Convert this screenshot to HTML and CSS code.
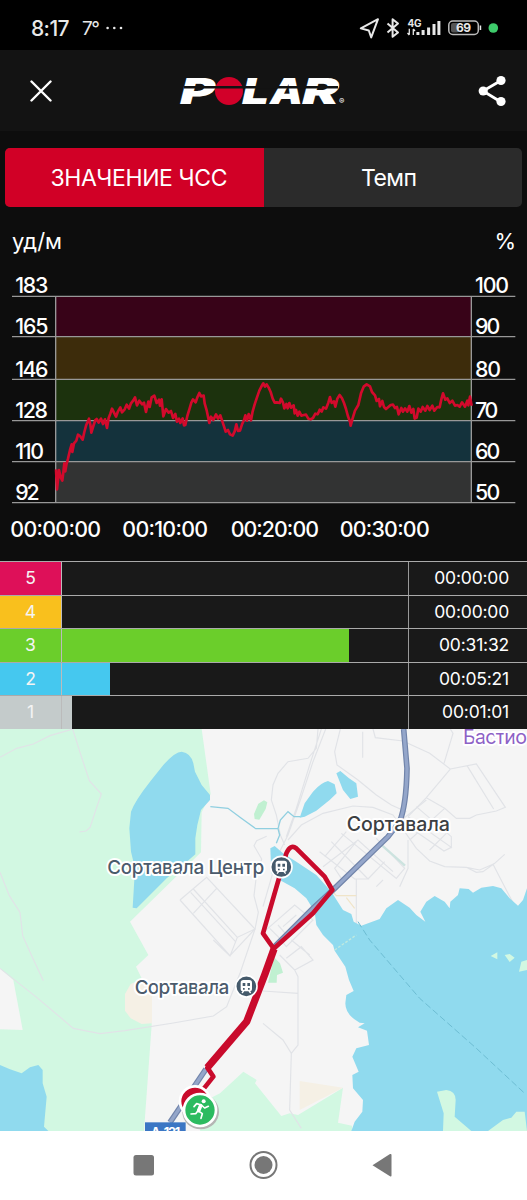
FILE: index.html
```html
<!DOCTYPE html>
<html lang="ru">
<head>
    <meta charset="UTF-8">
    <meta name="viewport" content="width=device-width, initial-scale=1.0">
    <title>Polar</title>
    <link rel="stylesheet" href="styles.css">
</head>
<body>
    <div class="status-bar">
        <div class="status-left">
            <span class="clock">8:17</span>
            <span class="weather">7°</span>
            <svg width="17" height="4" viewBox="0 0 17 4"><circle cx="1.6" cy="2" r="1.3"/><circle cx="8.3" cy="2" r="1.3"/><circle cx="15" cy="2" r="1.3"/></svg>
        </div>
        <svg class="status-icons" width="140" height="24" viewBox="0 0 140 24">
            <path class="line" d="M1.8 12.4 19 3.2 12.2 21.4 9.8 14.5Z"/>
            <path class="line" d="M28.5 7.5 39 16.5 33.6 20.8V3.2L39 7.5 28.5 16.500"/>
            <text x="48.500" y="10.500" textLength="14" class="net">4G</text>
            <path class="line thin" d="M50.300 12.800v6M48.500 17l1.800 2M54.300 19v-6M56 15l-1.700-2"/>
            <path class="signal" d="M58.900 19v-3M64.100 19v-5M69.600 19V11.500M75 19V8M79.900 19V5"/>
            <rect class="frame" x="89.800" y="5" width="29.500" height="13.500" rx="4"/>
            <rect class="charge" x="92" y="7" width="8" height="9.500" rx="2"/>
            <text x="97" y="16.200" textLength="15" class="percent">69</text>
            <rect x="120.700" y="9.500" width="1.500" height="4.500"/>
            <circle class="active-dot" cx="134.300" cy="12" r="4.800"/>
        </svg>
    </div>

    <header class="header">
        <svg class="icon-close" width="22" height="22" viewBox="0 0 22 22"><path d="M1.500 1.500 20.500 20.500M20.500 1.500 1.500 20.500"/></svg>
        <svg class="logo" width="176" height="50" viewBox="-4 -11 176 50">
            <circle cx="49" cy="14" r="14"/>
            <text x="0" y="27" textLength="35" lengthAdjust="spacingAndGlyphs">P</text>
            <text x="62" y="27" textLength="27" lengthAdjust="spacingAndGlyphs">L</text>
            <text x="90" y="27" textLength="33" lengthAdjust="spacingAndGlyphs">A</text>
            <text x="122" y="27" textLength="37" lengthAdjust="spacingAndGlyphs">R</text>
            <path d="M4 10.300H158"/>
            <text x="159" y="26.500" class="reg">®</text>
        </svg>
        <svg class="icon-share" width="28" height="32" viewBox="0 0 28 32">
            <path d="M23 5.500 5 16 23 27"/>
            <circle cx="23" cy="5.500" r="4.600"/><circle cx="5.200" cy="16" r="4.600"/><circle cx="23" cy="26.500" r="4.600"/>
        </svg>
    </header>

    <main class="training">
        <div class="tabs">
            <div class="tab active">ЗНАЧЕНИЕ ЧСС</div>
            <div class="tab">Темп</div>
        </div>
        <div class="units">
            <span>уд/м</span>
            <span>%</span>
        </div>

        <!-- heart rate chart -->
        <svg class="chart" width="527" height="280" viewBox="0 0 1581 840">
            <rect class="z5" x="167" y="78" width="1247" height="121"/>
            <rect class="z4" x="167" y="199" width="1247" height="129"/>
            <rect class="z3" x="167" y="328" width="1247" height="124"/>
            <rect class="z2" x="167" y="452" width="1247" height="123"/>
            <rect class="z1" x="167" y="575" width="1247" height="122"/>
            <path class="grid" d="M36 79H1546M36 200H1546M36 328H1546M36 452H1546M36 575H1546M36 698H1546M167 79V698M1414 79V698"/>
            <path class="pulse" d="M168 598 171 658 177 600 182 622 187 632 191 598 193 580 196 604 199 585 204 566 210 540 215 523 217 546 222 520 229 512 234 494 240 498 248 509 253 486 259 464 267 446 271 464 274 488 280 468 286 450 290 447 296 458 303 446 309 462 315 448 321 474 326 444 331 431 336 416 342 428 348 440 354 424 361 412 366 427 374 418 380 404 387 416 393 400 400 391 405 382 411 406 418 392 426 403 432 398 438 426 445 395 449 411 455 382 463 377 470 399 477 389 480 407 485 388 490 439 498 417 506 428 513 423 519 444 526 432 531 455 537 446 541 459 548 445 552 466 556 465 562 438 568 418 574 398 579 388 587 397 592 382 598 369 603 379 611 377 614 400 620 421 624 440 628 459 633 440 640 450 648 433 654 446 661 436 667 454 672 469 677 485 684 480 690 493 698 497 704 484 709 463 714 483 720 482 726 463 732 450 736 436 741 452 746 432 753 451 758 424 764 403 771 382 778 362 786 346 790 340 795 350 800 343 806 353 812 366 818 386 824 398 831 397 839 399 843 386 849 398 853 415 859 402 863 415 868 399 873 413 881 406 884 430 888 420 893 437 898 425 904 437 911 435 918 434 925 446 932 448 939 444 946 431 953 433 959 419 965 425 970 412 978 416 985 398 990 381 995 399 1002 394 1006 410 1012 386 1019 375 1026 385 1032 399 1038 417 1044 439 1050 455 1052 467 1057 448 1065 422 1075 405 1083 370 1091 350 1100 343 1110 349 1116 366 1125 376 1130 393 1137 387 1140 409 1147 393 1152 411 1158 417 1165 411 1172 405 1179 404 1185 414 1191 411 1196 433 1204 414 1209 425 1215 415 1222 425 1228 408 1234 428 1240 417 1244 446 1250 443 1255 416 1262 425 1268 411 1276 422 1282 408 1289 420 1297 407 1303 422 1312 411 1319 412 1324 388 1329 370 1336 389 1342 385 1349 399 1357 392 1365 407 1372 405 1379 410 1386 397 1395 410 1402 392 1405 406 1410 380 1415 407"/>
            <g class="labels">
                <text x="46" y="70" textLength="99">183</text>
                <text x="46" y="191" textLength="99">165</text>
                <text x="46" y="320" textLength="99">146</text>
                <text x="46" y="444" textLength="98">128</text>
                <text x="46" y="567" textLength="86">110</text>
                <text x="46" y="690" textLength="73">92</text>
                <text x="1425" y="70" textLength="102">100</text>
                <text x="1425" y="191" textLength="76">90</text>
                <text x="1425" y="320" textLength="78">80</text>
                <text x="1425" y="444" textLength="70">70</text>
                <text x="1425" y="567" textLength="76">60</text>
                <text x="1425" y="690" textLength="76">50</text>
                <text x="31" y="801" textLength="272">00:00:00</text>
                <text x="367" y="801" textLength="257">00:10:00</text>
                <text x="692" y="801" textLength="265">00:20:00</text>
                <text x="1019" y="801" textLength="270">00:30:00</text>
            </g>
        </svg>

        <!-- time in zones -->
        <div class="zones">
            <div class="zone zone-5"><span class="num">5</span><div class="track"></div><span class="time">00:00:00</span></div>
            <div class="zone zone-4"><span class="num">4</span><div class="track"></div><span class="time">00:00:00</span></div>
            <div class="zone zone-3"><span class="num">3</span><div class="track"><div class="bar" style="width: 83%"></div></div><span class="time">00:31:32</span></div>
            <div class="zone zone-2"><span class="num">2</span><div class="track"><div class="bar" style="width: 14%"></div></div><span class="time">00:05:21</span></div>
            <div class="zone zone-1"><span class="num">1</span><div class="track"><div class="bar" style="width: 3%"></div></div><span class="time">00:01:01</span></div>
        </div>
    </main>

    <svg class="map" width="527" height="402" viewBox="0 0 1581 1206">
        <!-- forest -->
        <path class="forest" d="M0 0H605L632 195 605 250 603 370 390 578 445 678 408 713 430 758 455 780V888L432 1206H0Z"/>
        <path class="land" d="M0 718 40 753 68 903 0 901Z"/>
        <path class="sand" d="M375 795 392 765 420 753 456 770V883L425 885 392 868 375 845Z"/>
        <path class="forest" d="M600 1206 620 1113 660 1093 730 1028 770 1053 765 1063 789 1093 844 1161 869 1153 894 1158 1029 1076 1014 1181 1056 1190V1206Z"/>
        <path class="sand" d="M899 1056 1029 1076 899 1143Z"/>
        <path class="park" d="M804 761H830L831 738 849 731 840 703 822 685ZM762 255 775 224 792 214 802 220 797 240 778 272 764 270Z"/>

        <!-- minor roads -->
        <g class="roads">
            <path d="M0 85 50 58 100 45 150 20 205 4 218 0 240 70 268 155 304 195 285 250 270 295 258 306 238 309M0 430 28 500 60 550 68 620 95 680 130 755M0 718 110 805 220 898 300 914 375 905 520 882 640 861 680 833 720 733 765 600 775 550 762 500 768 450 785 390 762 350 770 335 800 322"/>
            <path d="M540 513 620 445 765 600 690 680 540 513M580 553 650 478M580 480 712 625M572 490 706 637M640 633 690 681 712 625 765 600"/>
        </g>
        <g class="roads" transform="translate(789 -12)">
            <path d="M165 12 160 70 135 100 75 110 45 145 30 180 25 225 40 270 52 330 65 360M188 12 150 110 112 225 75 330 45 390 0 545M175 12 140 120 100 250 70 335M232 12 215 80 222 120 285 165 340 210 385 240 430 260M299 20V98M330 12 337 38 420 48 500 85 562 132 490 218 435 275M562 12 570 25 543 115M562 132 640 117 727 247 700 258 640 270 620 280 580 280 545 250 490 218M612 122 692 252"/>
            <path d="M75 345 115 300 180 265 270 243 330 247 390 270 425 320 460 370 500 408 545 425 610 427 640 442 660 440 695 415 725 388M610 427 650 435 690 418 735 505 770 570 790 590M435 275 565 367 543 378 430 300M460 245 565 335V370M490 225 410 290M545 250 440 345M500 375 550 325M435 345V430L410 485"/>
            <path d="M185 395 250 320M205 350 315 462H275L170 380M180 425 285 345 390 440M235 325 400 460 425 430 340 340M280 350 215 430 235 460M315 462 365 410M280 462V595M360 465 340 485"/>
            <path class="gold" d="M205 495 220 512H280M250 518 275 550"/>
            <path d="M0 623 95 540 150 585 70 665 45 635 20 610M45 600 75 635M100 570 60 605M85 645 140 690M70 700 115 665 150 705 95 735 50 690M95 735 105 755V960L85 985 80 1155 115 1210M0 895 60 945 85 985M0 798 105 805"/>
        </g>
        <path class="green-road" d="M1139 343 1215 410"/>

        <!-- water -->
        <path class="water" d="M398 536 405 418 393 368 388 298 393 248Q405 215 450 158L490 108Q525 68 545 68 573 72 580 103L585 128 605 168 630 198V213L603 243 592 288 586 328V376L555 403 500 448 410 538Z"/>
        <path class="water" d="M0 1008 30 1021 65 1033 90 1015 115 1008 128 1023V1063L140 1103 132 1193 145 1206H0Z"/>
        <g transform="translate(789 -12)">
            <path class="stream" d="M-158 245 -105 250 -65 280 -22 311H45L52 285 75 260 93 275 113 275M45 311 50 330 40 355"/>
            <path class="water" d="M110 278 125 235 150 200Q175 172 195 168L215 178 221 205 200 225 160 257 125 275ZM220 145 232 138 258 160 280 175 285 215 262 222 240 195Z"/>
            <path class="water" d="M22 370 35 363 60 385 100 410 160 450 205 500 240 555 265 567 272 590 295 602 350 582 370 550 405 525 440 548 460 570 487 590 472 560 490 530 515 513 545 530 560 550 562 530 585 510 590 490 617 492 630 503 655 488 690 483 715 490 740 520 765 542 780 525 792 490V1218H265L275 1190 298 1160 300 1125 270 1090 268 1050 287 1040 268 995 280 970 318 960 312 917 285 907 305 895 290 893Q247 870 247 835L250 810 272 798 258 765 247 725 215 677 210 660 180 630 160 600 155 560 130 520 95 490 50 465 25 445Z"/>
            <path class="island" d="M522 1100 550 1095Q578 1098 578 1125L575 1175 625 1218H540L542 1165ZM675 1218 720 1185 745 1178 760 1160 785 1160 792 1218ZM683 693 703 682V703ZM725 690 740 687 755 698 740 711ZM768 740 775 710 792 705V735Z"/>
            <path class="ferry" d="M285 590 320 645 470 820 640 970 785 1105"/>
            <path class="pier" d="M215 675 280 630"/>
            <path class="road-edge" d="M422 12 432 130Q430 240 410 290L375 335 215 490 150 550 30 670"/>
            <path class="road-main" d="M422 12 432 130Q430 240 410 290L375 335 215 490 150 550 30 670"/>
        </g>
        <path class="road-edge" d="M510 1180 618 1020"/>
        <path class="road-main" d="M510 1180 618 1020"/>

        <!-- track -->
        <path class="route wide" d="M622 1016 740 878 795 735 822 660"/>
        <path class="route" d="M590 1110 612 1078 640 1043 622 1016 740 878 822 660 789 613 834 458 859 373Q872 344 889 358L974 443 997 483 939 553 820 660"/>

        <!-- stations -->
        <g class="station" transform="translate(844 414)">
            <circle r="32"/><rect x="-17" y="-19" width="34" height="34" rx="8"/><path d="M-11 -10h8v9h-8ZM3 -10h8v9H3ZM-10 5h5v5h-5ZM5 5h5v5H5Z"/><path class="rail" d="M-8 14-13 20M8 14 13 20"/>
        </g>
        <g class="station" transform="translate(739 772)">
            <circle r="32"/><rect x="-17" y="-19" width="34" height="34" rx="8"/><path d="M-11 -10h8v9h-8ZM3 -10h8v9H3ZM-10 5h5v5h-5ZM5 5h5v5H5Z"/><path class="rail" d="M-8 14-13 20M8 14 13 20"/>
        </g>

        <g class="places">
            <text x="322" y="435" textLength="471">Сортавала Центр</text>
            <text x="404" y="795" textLength="284">Сортавала</text>
            <text class="city" x="1040" y="306" textLength="310">Сортавала</text>
            <text class="poi" x="1389" y="46" textLength="192">Бастио</text>
        </g>

        <rect class="shield" x="435" y="1180" width="122" height="40"/>
        <text class="shield-text" x="453" y="1223" textLength="88">А-121</text>

        <!-- start and finish pins -->
        <ellipse class="pin-shadow" cx="602" cy="1148" rx="55" ry="53"/>
        <circle class="pin finish" cx="585" cy="1117" r="45"/>
        <circle class="pin start" cx="600" cy="1143" r="48"/>
        <g class="runner" transform="translate(600 1142)">
            <circle cx="11" cy="-25" r="6"/>
            <path d="M-18 -9-10 -18 4 -14 14 -5 25 -10M2 -14-6 3 7 12 3 26M-6 3-13 12-27 13"/>
            <path class="torso" d="M2 -12-4 3"/>
        </g>
    </svg>

    <nav class="nav-bar">
        <svg width="260" height="30" viewBox="0 0 260 30">
            <rect x="0.500" y="5" width="20.500" height="20.500" rx="2.500"/>
            <circle class="ring" cx="130.500" cy="15" r="13"/><circle cx="130.500" cy="15" r="9"/>
            <path d="M239.500 15.200 257 4Q258.500 3.500 258.500 5V25.500Q258.500 27 257 26.200Z"/>
        </svg>
    </nav>
</body>
</html>
```
FILE: styles.css
```css
body {
    margin: 0;
    width: 527px;
    height: 1200px;
    overflow: hidden;
    background-color: #0d0d0d;
    font-family: Inter, 'Liberation Sans', sans-serif;
    color: #fff;
    display: flex;
    flex-direction: column;
}
svg {
    display: block;
    flex: none;
}

/* status bar */
.status-bar {
    height: 50px;
    box-sizing: border-box;
    padding: 6px 28px 0 31px;
    background-color: #000;
    display: flex;
    justify-content: space-between;
    align-items: center;
    color: #e8e8e8;
    fill: #e8e8e8;
}
.status-left {
    display: flex;
    align-items: center;
}
.clock {
    font-size: 21px;
    font-weight: 500;
    letter-spacing: -0.6px;
    width: 51px;
}
.weather {
    font-size: 19px;
    width: 24px;
    letter-spacing: -1.5px;
}
.status-icons .line {
    fill: none;
    stroke: #e8e8e8;
    stroke-width: 2;
    stroke-linejoin: round;
}
.status-icons .thin {
    stroke-width: 1.3;
}
.status-icons .signal {
    stroke: #e8e8e8;
    stroke-width: 3;
}
.status-icons .frame {
    fill: none;
    stroke: #bdbdbd;
    stroke-width: 1.5;
}
.status-icons .charge {
    fill: #555;
}
.net {
    font-size: 10px;
    font-weight: 700;
}
.percent {
    font-size: 12px;
    font-weight: 700;
}
.active-dot {
    fill: #3ecb6b;
}

/* header */
.header {
    height: 81px;
    box-sizing: border-box;
    padding: 0 21px 0 30px;
    background-color: #131313;
    display: flex;
    align-items: center;
    justify-content: space-between;
}
.icon-close {
    fill: none;
    stroke: #fff;
    stroke-width: 2.4;
    stroke-linecap: round;
}
.logo {
    margin-right: 3px;
}
.logo circle {
    fill: #d20029;
}
.logo text {
    font-size: 36px;
    font-weight: 900;
    font-style: italic;
    fill: #fff;
}
.logo path {
    stroke: #131313;
    stroke-width: 2.6;
}
.logo .reg {
    font-size: 8px;
    font-weight: 400;
    font-style: normal;
}
.icon-share {
    fill: #fff;
}
.icon-share path {
    fill: none;
    stroke: #fff;
    stroke-width: 2.8;
}

/* tabs */
.training {
    height: 598px;
    display: flex;
    flex-direction: column;
}
.tabs {
    display: flex;
    height: 59px;
    margin: 17px 5px 0 5px;
    border-radius: 5px;
    overflow: hidden;
    background-color: #2b2b2b;
}
.tab {
    width: 50%;
    box-sizing: border-box;
    padding-right: 8px;
    display: flex;
    align-items: center;
    justify-content: center;
    font-size: 23px;
    letter-spacing: -0.6px;
}
.tab.active {
    background-color: #d10026;
    letter-spacing: -0.4px;
    padding: 0 0 0 9px;
}
.units {
    display: flex;
    justify-content: space-between;
    align-items: center;
    height: 63px;
    padding: 4px 11px 0 12px;
    box-sizing: border-box;
    font-size: 22px;
}

/* chart */
.z5 { fill: #380318; }
.z4 { fill: #3d2c0b; }
.z3 { fill: #1c320d; }
.z2 { fill: #14323c; }
.z1 { fill: #323333; }
.grid {
    stroke: #989898;
    stroke-width: 4;
}
.pulse {
    fill: none;
    stroke: #d20a2c;
    stroke-width: 8;
    stroke-linejoin: round;
}
.labels {
    fill: #fff;
    font-size: 64px;
    font-weight: 500;
}

/* zones */
.zones {
    height: 168px;
    margin-top: 11px;
    display: grid;
    grid-template-rows: repeat(5, 1fr);
}
.zone {
    display: grid;
    grid-template-columns: 61px 348px 1fr;
    box-sizing: border-box;
    border-top: 1px solid #aaa;
    background-color: #191919;
    font-size: 17.5px;
    line-height: 32px;
}
.num {
    text-align: center;
    color: #f4f4f4;
}
.track {
    border-left: 1px solid #bbb;
    border-right: 1px solid #999;
}
.bar {
    height: 100%;
}
.time {
    text-align: right;
    padding-right: 18px;
    letter-spacing: -0.2px;
}
.zone-5 .num { background-color: #de1059; }
.zone-4 .num { background-color: #f9c01d; }
.zone-3 .num, .zone-3 .bar { background-color: #6bce2b; }
.zone-2 .num, .zone-2 .bar { background-color: #45c8ef; }
.zone-1 .num, .zone-1 .bar { background-color: #c4cbcb; }

/* map */
.map {
    background-color: #f5f5f5;
}
.land { fill: #f5f5f5; }
.forest { fill: #d2f8e2; }
.park { fill: #c0f0d1; }
.sand { fill: #f5f0e5; }
.water { fill: #90daee; }
.island { fill: #d2f8e2; }
.roads {
    fill: none;
    stroke: #e1e3e7;
    stroke-width: 3.5;
}
.roads .gold { stroke: #f0e4c8; }
.green-road {
    stroke: #cce3df;
    stroke-width: 7;
}
.stream, .ferry, .pier {
    fill: none;
    stroke: #90cfe0;
    stroke-width: 4;
}
.ferry {
    stroke: #6dbdd3;
    stroke-dasharray: 20 9;
    stroke-width: 3;
}
.pier {
    stroke: #c0eadf;
    stroke-dasharray: 8 5;
}
.road-edge {
    fill: none;
    stroke: #7184aa;
    stroke-width: 17;
}
.road-main {
    fill: none;
    stroke: #94a6ca;
    stroke-width: 10;
}
.route {
    fill: none;
    stroke: #c90b2c;
    stroke-width: 14;
    stroke-linejoin: round;
}
.route.wide {
    stroke-width: 22;
}
.station {
    fill: #fff;
}
.station circle {
    fill: #455a6b;
    stroke: #fff;
    stroke-width: 5;
}
.station path {
    fill: #455a6b;
}
.station .rail {
    stroke: #fff;
    stroke-width: 4;
}
.places {
    font-size: 57px;
    font-weight: 500;
    fill: #4b5b6c;
    stroke: #fff;
    stroke-width: 12;
    stroke-linejoin: round;
    paint-order: stroke;
}
.places .city {
    font-size: 59px;
    fill: #3c4043;
}
.places .poi {
    font-weight: 400;
    font-size: 59px;
    fill: #8d61c6;
}
.shield { fill: #3b76c4; }
.shield-text {
    fill: #fff;
    font-size: 38px;
    font-weight: 700;
}
.pin {
    stroke: #fff;
    stroke-width: 8;
}
.pin.finish { fill: #c90b2c; }
.pin.start { fill: #2cbb60; }
.pin-shadow { fill: #b4b5b4; }
.runner {
    fill: #fff;
}
.runner path {
    fill: none;
    stroke: #fff;
    stroke-width: 5;
    stroke-linejoin: round;
    stroke-linecap: round;
}
.runner .torso {
    stroke-width: 11;
}

/* bottom navigation */
.nav-bar {
    flex: 1;
    box-sizing: border-box;
    padding: 0 2px 1px 0;
    background-color: #fff;
    display: flex;
    justify-content: center;
    align-items: center;
    fill: #777;
}
.nav-bar .ring {
    fill: none;
    stroke: #777;
    stroke-width: 2;
}
```
